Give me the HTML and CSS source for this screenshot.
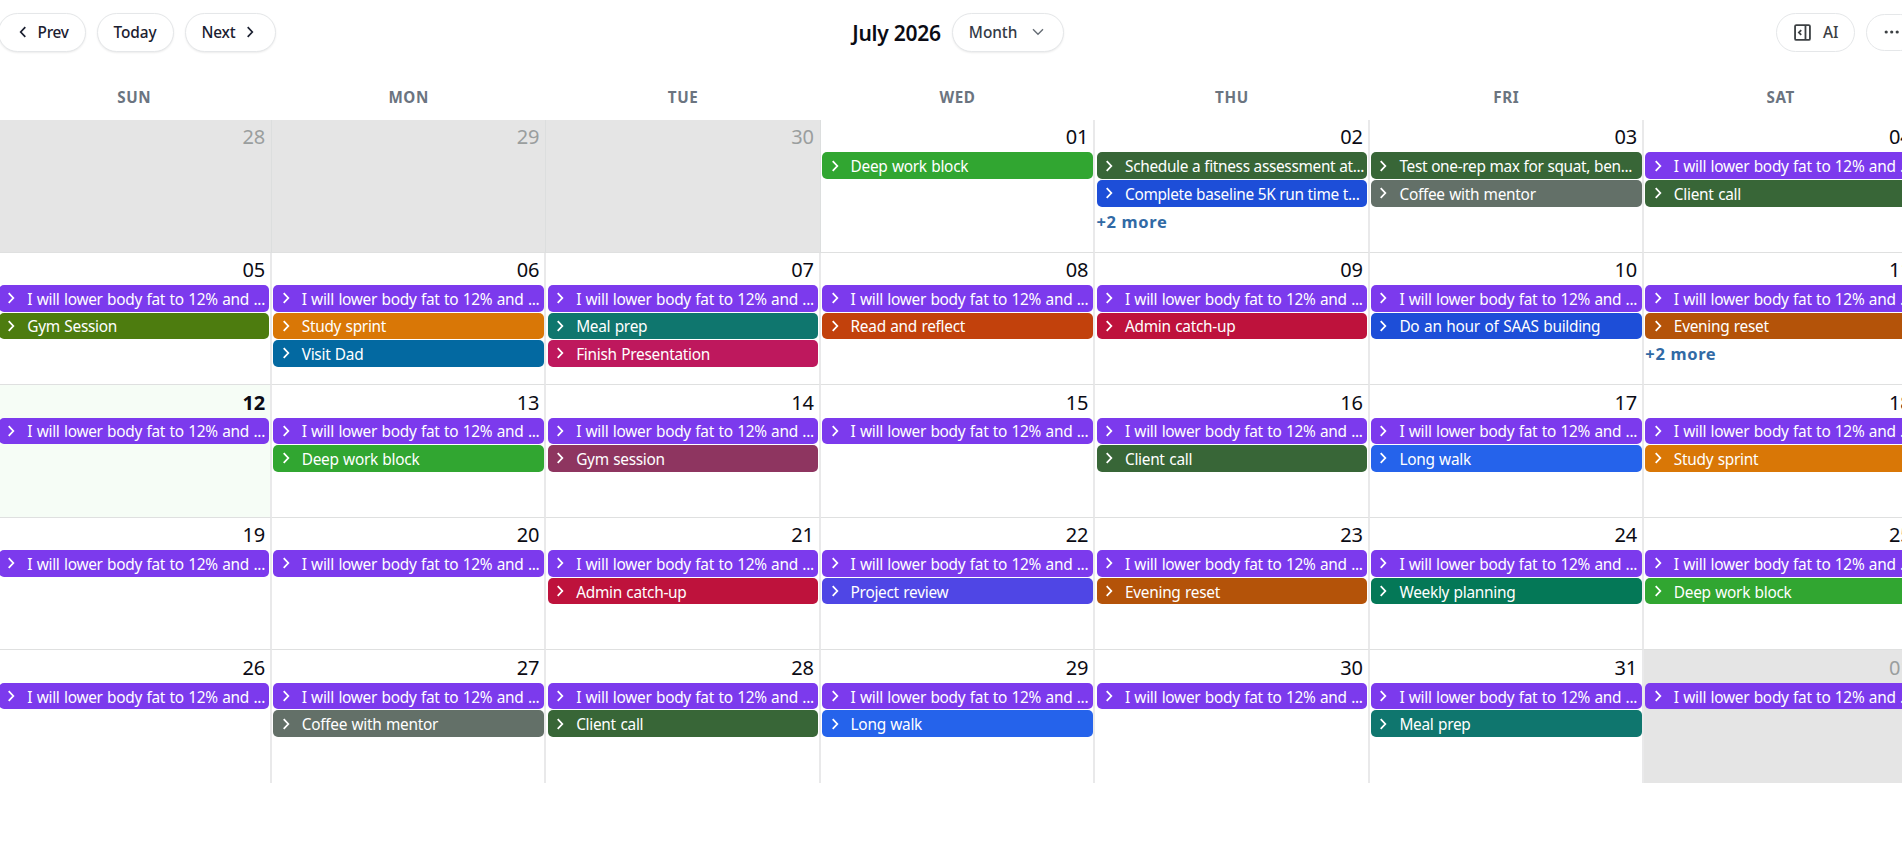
FILE: index.html
```html
<!DOCTYPE html>
<html lang="en">
<head>
    <meta charset="UTF-8">
    <meta name="viewport" content="width=device-width, initial-scale=1.0">
    <title>Calendar - July 2026</title>
    <link rel="stylesheet" href="styles.css">
</head>
<body>
    <div class="calendar">
        <header class="toolbar">
            <div class="nav">
                <button class="btn btn-prev">
                    <svg class="icon-arrow" viewBox="0 0 8 12"><path d="M6.3 1.2L1.7 6l4.6 4.8"/></svg>
                    <span>Prev</span>
                </button>
                <button class="btn btn-today"><span>Today</span></button>
                <button class="btn btn-next">
                    <span>Next</span>
                    <svg class="icon-arrow" viewBox="0 0 8 12"><path d="M1.7 1.2L6.3 6l-4.6 4.8"/></svg>
                </button>
            </div>
            <div class="center">
                <h1>July 2026</h1>
                <button class="btn btn-view">
                    <span>Month</span>
                    <svg class="icon-down" viewBox="0 0 12 8"><path d="M1 1.2l5 5 5-5"/></svg>
                </button>
            </div>
            <div class="tools">
                <button class="btn btn-ai">
                    <svg class="icon-panel" viewBox="0 0 16 16"><rect x="1" y="1" width="14" height="14" rx="1.2"/><path d="M10.8 1v14M6.8 5.7L4.6 8l2.2 2.3"/></svg>
                    <span>AI</span>
                </button>
                <button class="btn btn-more">
                    <svg class="icon-dots" viewBox="0 0 16 4"><circle cx="2.2" cy="2" r="1.6"/><circle cx="7.7" cy="2" r="1.6"/><circle cx="13.2" cy="2" r="1.6"/></svg>
                </button>
            </div>
        </header>

        <div class="weekdays">
            <div>SUN</div><div>MON</div><div>TUE</div><div>WED</div><div>THU</div><div>FRI</div><div>SAT</div>
        </div>

        <div class="month" id="month"></div>
    </div>

    <script src="calendar.js"></script>
</body>
</html>
```
FILE: styles.css
```css
* {
    box-sizing: border-box;
}
body {
    margin: 0;
    background: #fff;
    color: #0b0b14;
    font-family: 'Noto Sans', 'Open Sans', sans-serif;
    overflow: hidden;
}
.calendar {
    width: 1921px;
    margin-left: -2.5px;
}

/* toolbar */
.toolbar {
    display: grid;
    grid-template-columns: 1fr auto 1fr;
    align-items: center;
    height: 64px;
}
.nav,
.center,
.tools {
    display: flex;
    align-items: center;
}
.nav {
    gap: 11px;
}
.tools {
    justify-content: flex-end;
    gap: 11px;
}
.btn {
    display: flex;
    align-items: center;
    height: 39px;
    padding: 0;
    border: 1px solid #e5e7e9;
    border-radius: 20px;
    background: #fff;
    color: #1b2030;
    font-family: inherit;
    font-size: 15.4px;
    font-weight: 500;
    white-space: nowrap;
    box-shadow: 0 1px 2px rgba(0,0,0,0.08);
}
.btn svg {
    flex: none;
    fill: none;
    stroke: currentColor;
    stroke-width: 1.7;
}
.btn-prev {
    width: 88px;
    gap: 11px;
    padding-left: 20px;
    letter-spacing: -0.25px;
}
.btn-today {
    width: 77px;
    justify-content: center;
    letter-spacing: -0.1px;
}
.btn-next {
    width: 91px;
    gap: 11px;
    padding-left: 16px;
    letter-spacing: -0.2px;
}
.icon-arrow {
    width: 8px;
    height: 12px;
}
.center h1 {
    margin: 0 11px 0 0;
    padding-top: 1px;
    font-size: 21px;
    font-weight: 600;
    letter-spacing: -0.25px;
}
.btn-view {
    width: 112px;
    gap: 15px;
    padding-left: 16px;
    color: #343a46;
    letter-spacing: -0.05px;
}
.btn-view .icon-down {
    width: 12px;
    height: 8px;
    color: #666d75;
    stroke-width: 1.4;
}
.btn-ai {
    width: 79px;
    gap: 12px;
    padding-left: 17px;
    color: #3c4043;
    box-shadow: none;
}
.icon-panel {
    width: 17px;
    height: 17px;
}
.btn-more {
    width: 52.5px;
    height: 37px;
    padding-left: 17px;
    color: #3c4043;
    box-shadow: none;
}
.btn-more .icon-dots {
    width: 16px;
    height: 4px;
    fill: currentColor;
    stroke: none;
}

/* grid */
.weekdays {
    display: grid;
    grid-template-columns: repeat(7, 1fr);
    height: 56px;
    padding-top: 22.5px;
    color: #6b7480;
    font-size: 15.2px;
    font-weight: 700;
    line-height: 21px;
    letter-spacing: 0.6px;
    text-align: center;
}
.weekdays div {
    padding-right: 1px;
}
.month {
    display: grid;
    grid-template-columns: repeat(7, 1fr);
    grid-auto-rows: 132.6px;
}
.day {
    min-width: 0;
    padding: 3.4px 0.5px 0 1.3px;
    border-right: 2px solid #e9e9ea;
    border-bottom: 1px solid #dfe0e0;
}
.day:nth-last-child(-n+7) {
    border-bottom: none;
}
.day-outside {
    background: #e5e5e5;
    border-right: 1px solid #dcdede;
    padding-right: 1.5px;
}
.day-today {
    background: #f6fdf6;
}
.day-number {
    height: 29px;
    padding-right: 4.5px;
    font-size: 20px;
    line-height: 28px;
    letter-spacing: -0.2px;
    text-align: right;
}
.day-outside .day-number {
    color: #9a9e9e;
}
.day-today .day-number {
    font-weight: 700;
}
.event {
    display: flex;
    align-items: center;
    height: 26.6px;
    margin-bottom: 1px;
    padding-left: 8.5px;
    border-radius: 5px;
    color: #fff;
    font-size: 15.4px;
    letter-spacing: -0.28px;
    word-spacing: 0.7px;
    white-space: nowrap;
    overflow: hidden;
}
.event svg {
    flex: none;
    width: 8px;
    height: 12px;
    margin-right: 12px;
    fill: none;
    stroke: #fff;
    stroke-width: 1.8;
}
.event span {
    padding-top: 2px;
}
.forest,
.blue {
    word-spacing: 1px;
    letter-spacing: -0.3px;
}
.tight {
    word-spacing: 0.2px;
    letter-spacing: -0.32px;
}
.more {
    color: #316aa5;
    font-size: 16.5px;
    font-weight: 700;
    line-height: 27px;
    letter-spacing: 0.65px;
}

.violet { background: #7c3aed; }
.green { background: #31a631; }
.forest { background: #386637; }
.blue { background: #1d4ed8; }
.sky { background: #2563eb; }
.gray { background: #637068; }
.olive { background: #4d7c0f; }
.orange { background: #d97706; }
.ocean { background: #0369a1; }
.teal { background: #0f766e; }
.pink { background: #be185d; }
.rust { background: #c2410c; }
.crimson { background: #be123c; }
.brown { background: #b45309; }
.plum { background: #8e3560; }
.indigo { background: #4f46e5; }
.emerald { background: #047857; }
```
FILE: calendar.js
```js
const goal = ['violet', 'I will lower body fat to 12% and ...'];

// [day number, events, extra count]
const days = [
    ['28', []],
    ['29', []],
    ['30', []],
    ['01', [['green', 'Deep work block']]],
    ['02', [['forest tight', 'Schedule a fitness assessment at...'], ['blue tight', 'Complete baseline 5K run time t...']], 2],
    ['03', [['forest tight', 'Test one-rep max for squat, ben...'], ['gray', 'Coffee with mentor']]],
    ['04', [goal, ['forest', 'Client call']]],

    ['05', [goal, ['olive', 'Gym Session']]],
    ['06', [goal, ['orange', 'Study sprint'], ['ocean', 'Visit Dad']]],
    ['07', [goal, ['teal', 'Meal prep'], ['pink', 'Finish Presentation']]],
    ['08', [goal, ['rust', 'Read and reflect']]],
    ['09', [goal, ['crimson', 'Admin catch-up']]],
    ['10', [goal, ['blue', 'Do an hour of SAAS building']]],
    ['11', [goal, ['brown', 'Evening reset']], 2],

    ['12', [goal]],
    ['13', [goal, ['green', 'Deep work block']]],
    ['14', [goal, ['plum', 'Gym session']]],
    ['15', [goal]],
    ['16', [goal, ['forest', 'Client call']]],
    ['17', [goal, ['sky', 'Long walk']]],
    ['18', [goal, ['orange', 'Study sprint']]],

    ['19', [goal]],
    ['20', [goal]],
    ['21', [goal, ['crimson', 'Admin catch-up']]],
    ['22', [goal, ['indigo', 'Project review']]],
    ['23', [goal, ['brown', 'Evening reset']]],
    ['24', [goal, ['emerald', 'Weekly planning']]],
    ['25', [goal, ['green', 'Deep work block']]],

    ['26', [goal]],
    ['27', [goal, ['gray', 'Coffee with mentor']]],
    ['28', [goal, ['forest', 'Client call']]],
    ['29', [goal, ['sky', 'Long walk']]],
    ['30', [goal]],
    ['31', [goal, ['teal', 'Meal prep']]],
    ['01', [goal]]
];

const todayIndex = 14;

function renderEvent([color, title]) {
    return `<div class="event ${color}">
        <svg viewBox="0 0 8 12"><path d="M1.7 1.2L6.3 6l-4.6 4.8"/></svg><span>${title}</span>
    </div>`;
}

document.getElementById('month').innerHTML = days.map(([number, events, extra], i) => {
    let cls = 'day';
    if (i < 3 || i === days.length - 1) cls += ' day-outside';
    if (i === todayIndex) cls += ' day-today';
    return `<div class="${cls}">
        <div class="day-number">${number}</div>
        ${events.map(renderEvent).join('')}
        ${extra ? `<div class="more">+${extra} more</div>` : ''}
    </div>`;
}).join('');
```
